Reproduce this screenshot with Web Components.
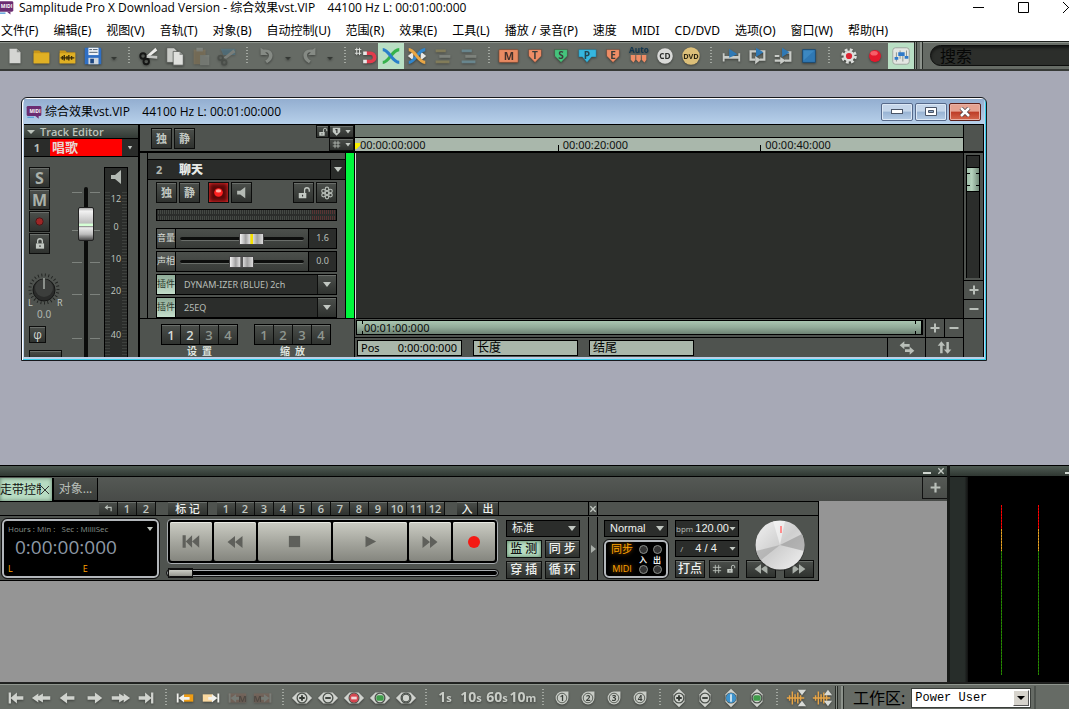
<!DOCTYPE html>
<html lang="zh-CN">
<head>
<meta charset="utf-8">
<title>Samplitude Pro X</title>
<style>
  html, body {
    height: 100%;
    margin: 0;
    overflow: hidden;
    background: #a7a9b6;
  }

  body {
    font: 12px/16px "Noto Sans", "Noto Sans CJK SC", sans-serif;
    color: #000;
    --panel: #4f534f;
    --panel-dark: #2b2d2b;
    --mint: #b7dcc2;
    --ruler: #a9b7ab;
    --light: #c2c8c2;
  }
</style>
</head>
<body>
<samp-app></samp-app>

<script>
/* ---------- helpers ---------- */

const BASE_CSS = `
  *, *::before, *::after { box-sizing: border-box; }
  button, input, select { font: inherit; color: inherit; margin: 0; padding: 0; border: 0; border-radius: 0; }
  button { background: none; display: flex; align-items: center; justify-content: center; white-space: nowrap; }
  .key {
    background: linear-gradient(#4b4f4b, #2f322f);
    border: 1px solid #0c0d0c;
    box-shadow: inset 0 1px 0 #6a6e6a;
    color: var(--light);
  }
  .down::after {
    content: "";
    width: 8px;
    height: 5px;
    background: var(--light);
    clip-path: polygon(0 0, 100% 0, 50% 100%);
  }
`;

function define(name, css, html, setup) {
  const template = document.createElement('template');
  template.innerHTML = `<style>${BASE_CSS}${css}</style>${html}`;

  customElements.define(name, class extends HTMLElement {
    constructor() {
      super();
      this.attachShadow({ mode: 'open' });
      this.shadowRoot.appendChild(template.content.cloneNode(true));
    }

    connectedCallback() {
      if (setup) setup(this, this.shadowRoot);
    }
  });
}

/* ---------- icons (24 x 24 grid) ---------- */

const shield = (color, letter) => `
  <path d="M5 5h14v7l-7 7-7-7z" fill="${color}" stroke="#3b2a22" stroke-opacity=".4"/>
  <text x="12" y="15" class="b" font-size="11" fill="#3a3d3a">${letter}</text>`;

const cross = (a, b) => `
  <path d="M3 19c7 0 10-14 18-14" fill="none" stroke="${a}" stroke-width="3.4"/>
  <path d="M3 5c7 0 10 14 18 14" fill="none" stroke="${b}" stroke-width="3.4"/>`;

const eye = inner => `
  <path d="M1 12l6-6h10l6 6-6 6H7z" fill="#d0d3ce"/><circle cx="12" cy="12" r="6" fill="#4b504b"/>
  <circle cx="12" cy="12" r="4.6" fill="#d0d3ce"/>${inner}`;

const eyeV = inner => `
  <path d="M12 2l6 6v8l-6 6-6-6V8z" fill="#d0d3ce"/><circle cx="12" cy="12" r="6" fill="#4b504b"/>
  <circle cx="12" cy="12" r="4.6" fill="#d0d3ce"/>${inner}`;

const slotNo = n => `
  <path d="M5 12a7 7 0 0 1 7-7h7v7a7 7 0 0 1-14 0z" fill="#c8ccc6"/>
  <circle cx="12" cy="12" r="5.2" fill="none" stroke="#50554f"/>
  <text x="12" y="15.5" class="b" font-size="9" fill="#3a3f3a">${n}</text>`;

const arrowL = 'M3 12l8-6v4h8v4h-8v4z';
const arrowR = 'M21 12l-8-6v4H5v4h8v4z';

const bars = (a, o) => `<g opacity="${o}"><path d="M4 5h11v3H4zM4 17h15v3H4z" fill="${a}"/><path d="M8 11h12v3H8z" fill="#8b908a"/></g>`;

const wave = c => `<path d="M2 12h19M5 9v6M8 5v14M11 8v8M14 6v12M17 9v6" fill="none" stroke="${c}" stroke-width="1.6"/>`;

const ICONS = {
  midi: `<rect x="1" y="3" width="22" height="15" rx="2" fill="#6b2c71"/><path d="M14 18l5 4v-4z" fill="#6b2c71"/>
    <path d="M2 20h10" stroke="#5aa0d8" stroke-width="2"/><text x="13.500" y="13" class="b" font-size="7" fill="#fff">MIDI</text>`,
  new: '<path d="M6 4h8l4 4v12H6z" fill="#d4d5d2"/><path d="M14 4v4h4z" fill="#8f928e"/>',
  folder: '<path d="M4 6h6l2 2h9v12H4z" fill="#c9961a"/><path d="M4 9h17v11H4z" fill="#e0b024"/>',
  wavfolder: '<path d="M4 6h6l2 2h9v12H4z" fill="#c9961a"/><path d="M4 9h17v11H4z" fill="#e0b024"/><path d="M5 14h15M7 12v4M9 11v6M12 12v4M14 11v6M17 12v4" stroke="#3a2c08" stroke-width="1.500"/>',
  save: '<path d="M3 3h17l1 1v17H3z" fill="#2f6fc4"/><path d="M7 3h11v8H7z" fill="#eef2f7"/><path d="M8 5h3M12 5h5M8 8h9" stroke="#456"/><path d="M7 14h11v7H7z" fill="#cfd6de"/><path d="M9 15h4v5H9z" fill="#1d4680"/>',
  cut: '<path d="M8 13L19 3l2 3-10 8z" fill="#ececea"/><path d="M8 11l13 1v3l-12-1z" fill="#c2c4c1"/><circle cx="5.500" cy="12" r="3" fill="none" stroke="#151615" stroke-width="2"/><circle cx="9" cy="18" r="3" fill="none" stroke="#151615" stroke-width="2"/>',
  copy: '<path d="M3 3h8l3 3v13H3z" fill="#c9cbc7" stroke="#4b4f4b" stroke-width=".8"/><path d="M10 7h7l4 4v11H10z" fill="#dfe0dd" stroke="#4b4f4b" stroke-width=".8"/><path d="M17 7v4h4z" fill="#8f928e"/>',
  paste: '<g opacity=".45"><path d="M4 5h13v16H4z" fill="#9a8259"/><path d="M7 3h7v4H7z" fill="#a6aaa5"/><path d="M11 11h10v11H11z" fill="#999e98"/></g>',
  brush: '<g opacity=".5"><path d="M5 4h16v7H8z" fill="#4d7f97"/><path d="M8 14L19 5l2 3-10 7z" fill="#a2a6a1"/><circle cx="5" cy="14" r="2.500" fill="none" stroke="#3b3f3b" stroke-width="2"/><circle cx="9" cy="19" r="2.500" fill="none" stroke="#3b3f3b" stroke-width="2"/></g>',
  undo: '<path d="M5 3v8h8l-3-3c5-1 6 6 0 9l2 3c10-5 7-17-4-15z" fill="#858a84"/>',
  redo: '<path d="M19 3v8h-8l3-3c-5-1-6 6 0 9l-2 3C2 15 5 3 16 5z" fill="#858a84"/>',
  magnet: '<path d="M3 3v8M6 3v8M1 5h7M1 9h7" stroke="#e4e6e3"/><path d="M12 9h6a4 4 0 0 1 0 9h-6" fill="none" stroke="#e23c4c" stroke-width="4"/><path d="M10 7h4v4h-4zM10 16h4v4h-4z" fill="#e8e8e8"/>',
  cross: cross('#36b24c', '#2a7fc9'),
  crossauto: '<path d="M2 12l6-5v10zM22 12l-6-5v10z" fill="#e8e8e6"/>' + cross('#3186cc', '#e8a646'),
  bars1: bars('#91875b', .75),
  bars2: bars('#6f95a0', .75),
  m: '<rect x="1" y="5" width="21" height="14" rx="1" fill="#e88a62" stroke="#6b3b27" stroke-opacity=".6"/><text x="12" y="16" class="b" font-size="12" fill="#43302a">M</text>',
  t: shield('#ee8d66', 'T'),
  s: shield('#45c37c', 'S'),
  p: '<path d="M3 5h19v8h-5l-5 6-5-6H3z" fill="#35b6df" stroke="#1d5b70" stroke-opacity=".4"/><text x="12" y="15" class="b" font-size="11" fill="#234450">P</text>',
  e: shield('#ee8d66', 'E'),
  auto: '<text x="12" y="9" class="b" font-size="9" fill="#12364f">Auto</text><path d="M3 11h5v5l-2 3-3-3zM9 11h5v5l-2 3-3-3zM15 11h5v5l-2 3-3-3z" fill="#ee8d66"/>',
  cd: '<circle cx="12" cy="12" r="8.500" fill="#d9dad8"/><text x="12" y="15.500" class="b" font-size="9" fill="#2c2e2c">CD</text>',
  dvd: '<circle cx="12" cy="12" r="9.500" fill="#dcbf79"/><text x="12" y="15" class="b" font-size="8" fill="#2e2714">DVD</text>',
  range: '<path d="M3 9h2v3h15V9h2v9h-2v-3H5v3H3z" fill="#c9ccc8"/><path d="M10 4l9 6-9 4z" fill="#2f79b5"/>',
  loop: '<path d="M11 7H5v9h5M15 7h5v9h-5" fill="none" stroke="#c9ccc8" stroke-width="2.400"/><path d="M10 12l6 4-6 5z" fill="#c9ccc8"/><path d="M11 3l8 5-8 5z" fill="#2f79b5"/>',
  punch: '<path d="M3 17h8M14 17h6V8h-4" fill="none" stroke="#c9ccc8" stroke-width="2.400"/><path d="M9 13l6 4-6 4zM3 11h5v2H3z" fill="#c9ccc8"/><path d="M11 3l8 5-8 5z" fill="#2f79b5"/>',
  stop: '<path d="M5 5h14v14H5z" fill="#2f78b4" stroke="#1d4a72"/><path d="M6 6h12L6 17z" fill="#4a97d0" opacity=".5"/>',
  gear: '<circle cx="12" cy="12" r="7" fill="none" stroke="#dcdedb" stroke-width="3" stroke-dasharray="3 2.500"/><circle cx="12" cy="12" r="6" fill="#dcdedb"/><circle cx="12" cy="12" r="3.400" fill="#dd2433"/>',
  rec: '<circle cx="12" cy="12" r="6.500" fill="#e3182c"/><ellipse cx="11" cy="9" rx="4" ry="2.500" fill="#ff7b82" opacity=".7"/>',
  mixer: '<rect x="3" y="3" width="18" height="18" rx="3" fill="#e3e6e2" stroke="#9aa39b"/><path d="M7 8v10M11 6v9M14 9v9M18 6v8" stroke="#8a908a"/><path d="M5 13h4v3H5zM9 8h4v4H9zM13 8h3v4h-3zM16 12h4v3h-4z" fill="#2f79c9"/>',
  first: '<path d="M4 6h2.500v12H4z" fill="#d0d3ce"/><path d="M6 12l7-6v4h7v4h-7v4z" fill="#d0d3ce"/>',
  rew: '<path d="M1 12l7-5v3l5-3v3h8v4h-8v3l-5-3v3z" fill="#d0d3ce"/>',
  left: `<path d="${arrowL}" fill="#d0d3ce"/>`,
  right: `<path d="${arrowR}" fill="#d0d3ce"/>`,
  ffwd: '<path d="M23 12l-7-5v3l-5-3v3H3v4h8v3l5-3v3z" fill="#d0d3ce"/>',
  last: '<path d="M17.500 6H20v12h-2.500z" fill="#d0d3ce"/><path d="M18 12l-7-6v4H4v4h7v4z" fill="#d0d3ce"/>',
  startsel: '<path d="M11 8h10v8H11z" fill="#ef9d14"/><path d="M3 7h2v10H3zM5 12l6-4v3h6v3h-6v3z" fill="#f2f2ee"/>',
  endsel: '<path d="M3 8h11v8H3z" fill="#fbd9a0"/><path d="M19 7h2v10h-2zM19 12l-6-4v3H9v3h4v3z" fill="#f2f2ee"/>',
  startm: '<g opacity=".5"><path d="M3 7h19v10H3z" fill="#8b6a5c"/><path d="M3 7h2v10H3zM5 12l6-4v3h4v3h-4v3z" fill="#9a9d98"/><text x="18" y="16" class="b" font-size="10" fill="#4b3b34">M</text></g>',
  endm: '<g opacity=".5"><path d="M2 7h19v10H2z" fill="#8b6a5c"/><path d="M19 7h2v10h-2zM19 12l-6-4v3H9v3h4v3z" fill="#9a9d98"/><text x="6" y="16" class="b" font-size="10" fill="#4b3b34">M</text></g>',
  zin: eye('<path d="M9 12h6M12 9v6" stroke="#333833" stroke-width="2"/>'),
  zout: eye('<path d="M9 12h6" stroke="#333833" stroke-width="2"/>'),
  zred: eye('<circle cx="12" cy="12" r="5" fill="#d4454f"/><path d="M9 12h6" stroke="#f3d8da" stroke-width="3"/>'),
  zgreen: eye('<rect x="8" y="9" width="8" height="6" rx="2" fill="#3f9c4a"/>'),
  zdot: eye('<circle cx="12" cy="12" r="4.600" fill="#4b504b"/><circle cx="12" cy="12" r="3.500" fill="#d0d3ce"/>'),
  vin: eyeV('<path d="M9 12h6M12 9v6" stroke="#333833" stroke-width="2"/>'),
  vout: eyeV('<path d="M9 12h6" stroke="#333833" stroke-width="2"/>'),
  vblue: eyeV('<circle cx="12" cy="12" r="5.500" fill="#3d92cc"/><path d="M12 8v8" stroke="#cfe6f5" stroke-width="2"/>'),
  vgreen: eyeV('<rect x="8" y="9" width="8" height="6" rx="2" fill="#3f9c4a"/>'),
  slot1: slotNo(1), slot2: slotNo(2), slot3: slotNo(3), slot4: slotNo(4),
  wavein: wave('#e8a546') + '<path d="M14 3h9l-4.500 6zM14 21h9l-4.500-6z" fill="#d8dad6"/>',
  waveout: wave('#e8a546') + '<path d="M14 9h9l-4.500-6zM14 15h9l-4.500 6z" fill="#d8dad6"/>',
  speaker: '<path d="M5 9h5l8-6v18l-8-6H5z" fill="#b4bab4"/>',
  lock: '<path d="M5 11h14v9H5z" fill="#c2c8c2"/><path d="M8 11V7a4 4 0 0 1 8 0v4" fill="none" stroke="#c2c8c2" stroke-width="2.200"/><path d="M12 14v3" stroke="#333" stroke-width="2"/>',
  unlock: '<path d="M3 12h13v9H3z" fill="#c2c8c2"/><path d="M13 12V7a4 4 0 0 1 8 0v3" fill="none" stroke="#c2c8c2" stroke-width="2.200"/><path d="M9.500 15v3" stroke="#333" stroke-width="2"/>',
  led: '<circle cx="12" cy="12" r="8" fill="#ff2020"/><ellipse cx="12" cy="9" rx="5" ry="3" fill="#ffaaa0"/>',
  leddim: '<circle cx="12" cy="12" r="8" fill="#9d2626" stroke="#4a1616" stroke-width="2"/>',
  reel: '<g fill="none" stroke="#b4bab4" stroke-width="2"><circle cx="12" cy="12" r="3"/><circle cx="12" cy="5" r="3"/><circle cx="12" cy="19" r="3"/><circle cx="6" cy="8.500" r="3"/><circle cx="18" cy="8.500" r="3"/><circle cx="6" cy="15.500" r="3"/><circle cx="18" cy="15.500" r="3"/></g>',
  hash: '<path d="M8 2v20M16 2v20M2 8h20M2 16h20" stroke="#c2c8c2" stroke-width="2"/>',
  mark: '<path d="M2 2h20v11l-10 10L2 13z" fill="#c2c8c2"/><path d="M9 7h4v9" fill="none" stroke="#333" stroke-width="3"/>',
  plus: '<path d="M12 3v18M3 12h18" stroke="#b9bfb9" stroke-width="4"/>',
  minus: '<path d="M3 12h18" stroke="#b9bfb9" stroke-width="4"/>',
  swaph: '<path d="M1 8l7-6v4h8v4H8v4zM23 16l-7-6v4H9v4h7v4z" fill="#b9bfb9"/>',
  swapv: '<path d="M7 2L1 9h4v12h4V9h4zM17 22l-6-7h4V3h4v12h4z" fill="#b9bfb9"/>',
  tostart: '<path d="M2 4h4v16H2zM14 4v16L6 12zM23 4v16l-9-8z" fill="#5f605b"/>',
  back: '<path d="M12 4v16L2 12zM22 4v16l-10-8z" fill="#5f605b"/>',
  halt: '<path d="M3 3h18v18H3z" fill="#5f605b"/>',
  play: '<path d="M4 3l17 9-17 9z" fill="#5f605b"/>',
  fwd: '<path d="M2 4v16l10-8zM12 4v16l10-8z" fill="#5f605b"/>',
  backl: '<path d="M12 4v16L1 12zM23 4v16l-11-8z" fill="#a9afa9"/>',
  fwdl: '<path d="M1 4v16l11-8zM12 4v16l11-8z" fill="#a9afa9"/>',
  record: '<circle cx="12" cy="12" r="12" fill="#f41a14"/>',
  hook: '<path d="M4 9h15v10M10 4L4 9l6 5" fill="none" stroke="#b9bfb9" stroke-width="3"/>',
  x: '<path d="M4 4l16 16M20 4L4 20" stroke="#c2c8c2" stroke-width="4"/>'
};

define('ui-icon', `
  :host { display: inline-flex; flex: none; width: var(--icon, 24px); height: var(--icon, 24px); }
  svg { width: 100%; height: 100%; display: block; overflow: visible; }
  .b { font-family: "Open Sans", sans-serif; font-weight: 700; text-anchor: middle; }
`, '<svg viewBox="0 0 24 24" aria-hidden="true"></svg>', (el, root) => {
  root.querySelector('svg').innerHTML = ICONS[el.getAttribute('name')] || '';
  if (el.hasAttribute('size')) el.style.setProperty('--icon', el.getAttribute('size') + 'px');
});

/* ---------- window chrome ---------- */

define('app-titlebar', `
  :host { display: flex; height: 18px; background: #fff; overflow: hidden; flex: none; }
  ui-icon { margin: -1px 5px 0 -3px; --icon: 17px; }
  .text { flex: 1; white-space: pre; line-height: 15px; font-family: "Open Sans", "Noto Sans CJK SC", sans-serif; }
  .controls { display: flex; margin-right: -22px; }
  button { width: 45px; height: 15px; }
  svg { display: block; }
`, `
  <ui-icon name="midi"></ui-icon>
  <div class="text"><slot></slot></div>
  <div class="controls">
    <button aria-label="Minimize"><svg width="11" height="11"><path d="M0 5.500h11" stroke="#000"/></svg></button>
    <button aria-label="Maximize"><svg width="11" height="11"><path d="M.5.5h10v10H.5z" fill="none" stroke="#000"/></svg></button>
    <button aria-label="Close"><svg width="11" height="11"><path d="M0 0l11 11M11 0L0 11" stroke="#000"/></svg></button>
  </div>
`);

define('app-menubar', `
  :host { display: flex; height: 23px; background: #fff; padding: 2px 0 0 1px; flex: none; }
  nav { display: flex; gap: 15px; align-items: center; }
  button { height: 20px; }
`, '<nav></nav>', (el, root) => {
  const nav = root.querySelector('nav');
  el.getAttribute('items').split('|').forEach(text => {
    const button = document.createElement('button');
    button.textContent = text;
    nav.append(button);
  });
});

/* one shared strip style for the top and bottom bars */
define('tool-strip', `
  :host { display: flex; align-items: center; background: #666b65; border-top: 1px solid #1d201d; box-shadow: inset 0 1px 0 #8f958e; flex: none; overflow: hidden; }
`, '<slot></slot>');

define('tool-sep', `
  :host { flex: none; width: var(--sep, 14px); height: 18px; background: repeating-linear-gradient(#a3a8a1 0 1px, transparent 1px 3px) center / 2px 100% no-repeat; }
`, '');

define('tool-edge', `
  :host { flex: none; width: 9px; align-self: stretch; border: solid #262a26; border-width: 0 1px; background: linear-gradient(90deg, #858b84 1px, #262a26 1px 2px, #666b65 2px 5px, #8d938c 5px); }
`, '');

define('tool-button', `
  :host { display: block; flex: none; width: 26px; height: 26px; }
  button { width: 100%; height: 100%; filter: drop-shadow(0 1px 1px #0006); }
  :host([active]) button { background: #b9dfc4; filter: none; }
  :host([caret]) { width: 16px; }
  :host([caret]) button::after { content: ""; border: solid transparent; border-width: 3px 3px 0; border-top-color: #343834; margin-top: 6px; }
  .text { font: 700 14px/20px "Open Sans", sans-serif; color: #c9cdc7; }
  .text small { font-size: 11px; }
`, '<button></button>', (el, root) => {
  const button = root.querySelector('button');
  const text = el.getAttribute('text');
  button.setAttribute('aria-label', el.getAttribute('label') || text || 'More');
  if (text) {
    button.innerHTML = `<span class="text">${text.slice(0, -1)}<small>${text.slice(-1)}</small></span>`;
  } else if (el.hasAttribute('icon')) {
    button.innerHTML = `<ui-icon name="${el.getAttribute('icon')}" size="${el.getAttribute('size') || 22}"></ui-icon>`;
  }
});

function stripHtml(spec) {
  return spec.split(' ').map(part => {
    if (part === '|') return '<tool-sep></tool-sep>';
    if (part === 'v') return '<tool-button caret></tool-button>';
    if (part[0] === '#') return `<tool-button text="${part.slice(1)}"></tool-button>`;
    const active = part[0] === '*';
    const icon = active ? part.slice(1) : part;
    return `<tool-button icon="${icon}" label="${icon}"${active ? ' active' : ''}></tool-button>`;
  }).join('');
}

define('app-toolbar', `
  :host { display: block; flex: none; }
  tool-strip { height: 30px; padding-left: 2px; border-bottom: 2px solid #363936; }
  .search {
    flex: 1; min-width: 60px; height: 21px; margin: 0 -20px 0 7px; padding-left: 9px;
    border: 1px solid #0d0e0d; border-radius: 11px; outline: 0;
    background: #2c2e2b; box-shadow: inset 0 2px 3px #0008; font-size: 16px; line-height: 18px;
  }
  .search::placeholder { color: #060706; opacity: 1; }
`, `<tool-strip>
    ${stripHtml('new folder wavfolder save v | cut copy paste brush | undo v redo v | magnet *cross crossauto bars1 bars2 | m t s p e auto cd dvd | range loop punch stop | gear rec *mixer')}
    <tool-edge></tool-edge>
    <input class="search" type="text" placeholder="搜索" aria-label="搜索">
  </tool-strip>`);

define('app-statusbar', `
  :host { display: block; flex: none; }
  tool-strip { height: 26px; padding: 2px 0 0 3px; --sep: 13px; }
  label { margin: 0 6px 0 9px; font-size: 16px; line-height: 24px; white-space: nowrap; }
  .box { position: relative; width: 120px; height: 20px; border: 1px solid #3a3e3a; background: #fff; display: flex; }
  select { flex: 1; appearance: none; background: #fff; padding-left: 3px; font: 12px/18px "Liberation Mono", monospace; outline: 0; }
  .drop { position: absolute; right: 1px; top: 1px; width: 16px; height: 16px; background: #d6d3cc; border: 1px solid; border-color: #fff #555 #555 #fff; display: grid; place-items: center; pointer-events: none; }
  .drop::after { content: ""; border: solid transparent; border-width: 4px 4px 0; border-top-color: #000; }
  .rest { flex: 1; align-self: stretch; margin-left: 3px; border-left: 2px solid #4e534e; }
`, `<tool-strip>
    ${stripHtml('first rew left right ffwd last | startsel endsel startm endm | zin zout zred zgreen zdot | #1s #10s #60s #10m | slot1 slot2 slot3 slot4 | vin vout vblue vgreen | wavein waveout')}
    <tool-edge></tool-edge>
    <label for="ws">工作区:</label>
    <div class="box"><select id="ws"><option>Power User</option></select><span class="drop"></span></div>
    <div class="rest"></div>
  </tool-strip>`);

/* ---------- project window ---------- */

define('project-window', `
  :host {
    display: block; border: 1px solid #16181c; border-radius: 6px 6px 0 0; padding: 0 2px 3px 2px;
    background: #bcd0e8; box-shadow: inset 1px 1px 0 #fff, inset -1px -1px 0 #35cdea;
  }
  header { display: flex; align-items: center; gap: 2px; height: 25px; margin: 1px 0 0; background: linear-gradient(#93aed0, #b7d0ea); }
  ui-icon { --icon: 16px; margin: 0 1px 0 2px; }
  .text { flex: 1; white-space: pre; font-family: "Open Sans", "Noto Sans CJK SC", sans-serif; }
  button { width: 32px; height: 18px; border: 1px solid #56698a; border-radius: 2px; background: linear-gradient(#c5d6ea 45%, #98b3d3 50%, #b5cce6); box-shadow: inset 0 0 0 1px #dce8f5; }
  button.close { background: linear-gradient(#e5a291 45%, #bd3c26 50%, #d4684e); border-color: #5b1f1a; box-shadow: inset 0 0 0 1px #e8b0a4; margin-right: 3px; }
  .body { display: grid; grid-template-columns: 116px 215px minmax(0, 1fr); height: 233px; border-top: 1px solid #000; background: var(--panel); border-right: 1px solid #000; overflow: hidden; }
`, `
  <header>
    <ui-icon name="midi"></ui-icon>
    <div class="text"><slot name="title"></slot></div>
    <button aria-label="Minimize"><svg width="12" height="6"><rect x=".5" y=".5" width="11" height="4" fill="#fff" stroke="#4a5568"/></svg></button>
    <button aria-label="Restore"><svg width="12" height="10"><path d="M.5.5h11v8H.5z" fill="#fff" stroke="#4a5568"/><path d="M3.500 3.500h5v2h-5z" fill="#8fa8c8" stroke="#4a5568"/></svg></button>
    <button class="close" aria-label="Close"><svg width="12" height="10"><path d="M2 1l8 8M10 1L2 9" stroke="#4a3a40" stroke-width="4"/><path d="M2 1l8 8M10 1L2 9" stroke="#fff" stroke-width="2.500"/></svg></button>
  </header>
  <div class="body"><slot></slot></div>
`);

define('track-console', `
  :host { display: flex; flex-direction: column; border-right: 2px solid #000; overflow: hidden; }
  h2 { margin: 0; height: 14px; display: flex; align-items: center; gap: 5px; padding-left: 3px; font: 600 11px/13px "Open Sans", sans-serif; color: #bcc4bc; background: linear-gradient(#545c56, #333a35); border-bottom: 1px solid #000; }
  h2::before { content: ""; border: solid transparent; border-width: 4px 4px 0; border-top-color: #bcc4bc; }
  .name { display: flex; height: 18px; background: #2a2c2a; border-bottom: 1px solid #000; color: #d5dad5; flex: none; }
  .name b { width: 26px; text-align: center; font-size: 11px; line-height: 17px; color: #b9bfb9; }
  .name strong { flex: 0 0 72px; background: #f00; font-size: 13px; line-height: 16px; padding-left: 2px; color: #e8d5d0; }
  .name button { flex: 1; }
  .name .down::after { width: 5px; height: 4px; }
  .strip { flex: 1; display: flex; padding-top: 10px; min-height: 0; }
  .left { width: 48px; padding-left: 5px; display: flex; flex-direction: column; gap: 1px; }
  .left .key { width: 21px; height: 21px; font: 700 16px/20px "Open Sans", sans-serif; flex: none; color: #a9b0a9; }
  .left .knob { display: block; margin: 17px 0 0 -3px; flex: none; }
  .left output { margin: 0 0 6px 8px; font-size: 10px; line-height: 10px; color: #b0b6b0; }
  .left .phase { width: 17px; height: 17px; font-size: 12px; line-height: 14px; font-weight: 400; color: #d0d6d0; }
  .left .more { width: 33px; height: 10px; margin-top: 6px; }
  .fader { flex: 1; display: grid; padding-top: 20px; }
  .fader > * { grid-area: 1 / 1; }
  .fader input { writing-mode: vertical-lr; direction: rtl; appearance: none; background: none; width: 16px; height: 100%; margin-left: 6px; }
  input::-webkit-slider-runnable-track { width: 4px; background: #0b0c0b; border-radius: 2px 2px 0 0; }
  input::-webkit-slider-thumb { appearance: none; width: 16px; height: 34px; margin-left: -6px; border: 1px solid #222; border-radius: 2px; background: linear-gradient(#aaa 0, #f2f2f2 10%, #bbb 48%, #d5ffd5 49% 56%, #888 57%, #ececec 62%, #bbb 82%, #4a4a4a); }
  .meter { width: 24px; margin-right: 10px; background: repeating-linear-gradient(#3e413e 0 1px, #2b2d2b 1px 3px); border: 1px solid #000; border-bottom: 0; }
  .meter svg { display: block; }
  svg text { font: 9px "Open Sans", sans-serif; fill: #c0c7c0; }
`, `
  <h2>Track Editor</h2>
  <div class="name"><b>1</b><strong>唱歌</strong><button class="down" aria-label="Track list"></button></div>
  <div class="strip">
    <div class="left">
      <button class="key">S</button>
      <button class="key">M</button>
      <button class="key" aria-label="Record"><ui-icon name="leddim" size="11"></ui-icon></button>
      <button class="key" aria-label="Lock"><ui-icon name="lock" size="14"></ui-icon></button>
      <svg class="knob" width="38" height="36">
        <circle cx="18" cy="17" r="14" fill="none" stroke="#1f211f" stroke-width="3" stroke-dasharray="1 3" pathLength="100"/>
        <circle cx="18" cy="18" r="11" fill="#2a2b2a" stroke="#151615"/><circle cx="18" cy="16" r="9" fill="#3c3e3c"/><path d="M18 6v11" stroke="#8c918c" stroke-width="2"/>
        <text x="2" y="34">L</text><text x="31" y="34">R</text>
      </svg>
      <output>0.0</output>
      <button class="key phase" aria-label="Phase">φ</button>
      <button class="key more" aria-label="More"></button>
    </div>
    <div class="fader">
      <svg width="30" height="160"><path d="M0 5.500h10M18 5.500h10M0 43.500h10M18 43.500h10M0 75.500h10M18 75.500h10M0 107.500h10M18 107.500h10M0 151.500h10M18 151.500h10" stroke="#7d827d"/></svg>
      <input type="range" min="0" max="100" value="85" aria-label="Track volume">
    </div>
    <div class="meter">
      <svg width="22" height="188">
        <rect width="22" height="23" fill="#2b2d2b"/><rect x="5" y="23" width="12" height="165" fill="#2b2d2b"/>
        <path d="M6 7h4l6-5v14l-6-5H6z" fill="#b4bab4"/>
        <g text-anchor="middle"><text x="11" y="34">12</text><text x="11" y="62">0</text><text x="11" y="94">10</text><text x="11" y="126">20</text><text x="11" y="170">40</text></g>
      </svg>
    </div>
  </div>
`);

define('param-row', `
  :host { display: flex; height: 21px; border: 1px solid #000; background: #2b2d2b; color: #b9bfb9; }
  .tag { width: 19px; flex: none; text-align: center; font-size: 9px; line-height: 18px; white-space: nowrap; background: linear-gradient(#5b5f5b, #3a3d3a); border-right: 1px solid #000; color: #d5dad5; }
  .mid { flex: 1; display: flex; align-items: center; padding: 0 4px; background: linear-gradient(#4c504c, #383b38); }
  output { width: 28px; border-left: 1px solid #000; text-align: center; font-size: 9px; line-height: 18px; }
  input { appearance: none; width: 100%; height: 16px; background: none; }
  input::-webkit-slider-runnable-track { height: 4px; background: #0d0e0d; border-radius: 2px; border-bottom: 1px solid #6a6e6a; }
  input::-webkit-slider-thumb { appearance: none; width: 25px; height: 12px; margin-top: -4px; border: 1px solid #444; background: linear-gradient(90deg, #f4f4f4, #a0a0a0 25%, #d8d8d8 40% 45%, var(--mark, #555) 46% 56%, #d8d8d8 57%, #a0a0a0 75%, #ddd); }
  :host([kind="plugin"]) .tag { background: linear-gradient(#8fac98, #c3ddca); color: #2c3a30; }
  .plug { flex: 1; padding-left: 8px; font-size: 9px; line-height: 19px; white-space: nowrap; }
  button.down { width: 19px; border-width: 0 0 0 1px; }
`, '', (el, root) => {
  const get = name => el.getAttribute(name);
  const tag = `<span class="tag">${get('tag')}</span>`;
  const body = get('kind') === 'plugin'
    ? `${tag}<span class="plug">${get('text')}</span><button class="key down" aria-label="${get('text')}"></button>`
    : `${tag}<span class="mid"><input type="range" min="0" max="100" value="${get('value')}" aria-label="${get('tag')}"></span><output>${get('text')}</output>`;
  const box = document.createElement('template');
  box.innerHTML = body;
  root.appendChild(box.content);
});

define('track-head', `
  :host { display: flex; flex-direction: column; background: var(--panel); border-right: 1px solid #000; overflow: hidden; }
  .key { width: 21px; height: 21px; font-size: 11px; font-weight: 700; line-height: 18px; flex: none; }
  .top { display: flex; height: 28px; border-bottom: 2px solid #000; }
  .pair { display: flex; gap: 2px; padding: 3px 0 0 11px; flex: 1; }
  .opts { display: grid; grid-template-columns: 13px 25px; grid-auto-rows: 13px; }
  .opts .key { width: auto; height: 13px; gap: 4px; }
  .opts .down::after { width: 6px; height: 4px; }
  .opts :last-child { grid-column: 2; }
  .track { display: flex; height: 166px; border-bottom: 1px solid #000; }
  .card { width: 199px; margin-left: 7px; border-left: 1px solid #000; padding-top: 6px; flex: 1; }
  .green { width: 9px; background: #00f73c; border-left: 1px solid #000; }
  .name { display: flex; height: 21px; border: solid #000; border-width: 1px 0; background: #2a2c2a; color: #e8ebe8; font-size: 12px; line-height: 19px; font-weight: 700; }
  .name span { width: 31px; padding-left: 8px; font-size: 11px; color: #b0b6b0; }
  .name strong { flex: 1; }
  .name button { width: 15px; border-left: 1px solid #000; }
  .icons { display: flex; gap: 2px; padding: 2px 8px 0; }
  .icons .gap-s { margin-left: 6px; }
  .icons .gap-l { margin-left: auto; }
  .on { background: #5a0808; box-shadow: inset 0 0 4px #f33; }
  .vu { height: 12px; margin: 6px 8px 7px; border: 1px solid #000; background: linear-gradient(transparent 4px, #2b2d2b 4px 6px, transparent 6px), repeating-linear-gradient(90deg, #2b2d2b 0 1px, transparent 1px 2px), linear-gradient(90deg, #444844 86%, #583434 86%); }
  .rows { display: grid; gap: 2px; margin: 0 8px; }
  .banks { display: flex; gap: 16px; padding: 5px 0 0 21px; text-align: center; color: #dfe4df; font-weight: 700; font-size: 10px; line-height: 12px; }
  .bank div { display: flex; border: 1px solid #000; }
  .bank .key { width: 19px; height: 19px; border-width: 0 1px 0 0; font: 600 13px/18px "Open Sans", sans-serif; color: #8f968f; }
  .bank .key:last-child { border: 0; width: 18px; }
  .bank .lit { color: #d5dad5; }
`, `
  <div class="top">
    <div class="pair"><button class="key">独</button><button class="key">静</button></div>
    <div class="opts">
      <button class="key" aria-label="Unlock"><ui-icon name="unlock" size="10"></ui-icon></button>
      <button class="key down" aria-label="Marker"><ui-icon name="mark" size="9"></ui-icon></button>
      <button class="key down" aria-label="Grid"><ui-icon name="hash" size="9"></ui-icon></button>
    </div>
  </div>
  <div class="track">
    <div class="card">
      <div class="name"><span>2</span><strong>聊天</strong><button class="down" aria-label="Track menu"></button></div>
      <div class="icons">
        <button class="key">独</button><button class="key">静</button>
        <button class="key on gap-s" aria-label="Record"><ui-icon name="led" size="13"></ui-icon></button>
        <button class="key" aria-label="Monitor"><ui-icon name="speaker" size="15"></ui-icon></button>
        <button class="key gap-l" aria-label="Unlock"><ui-icon name="unlock" size="14"></ui-icon></button>
        <button class="key" aria-label="Effects"><ui-icon name="reel" size="14"></ui-icon></button>
      </div>
      <div class="vu"></div>
      <div class="rows">
        <param-row tag="音量" value="60" text="1.6" style="--mark:#f5e000"></param-row>
        <param-row tag="声相" value="49" text="0.0"></param-row>
        <param-row kind="plugin" tag="插件" text="DYNAM-IZER (BLUE) 2ch"></param-row>
        <param-row kind="plugin" tag="插件" text="25EQ"></param-row>
      </div>
    </div>
    <div class="green"></div>
  </div>
  <div class="banks">
    <div class="bank"><div><button class="key lit">1</button><button class="key lit">2</button><button class="key">3</button><button class="key">4</button></div>设&nbsp; 置</div>
    <div class="bank"><div><button class="key">1</button><button class="key">2</button><button class="key">3</button><button class="key">4</button></div>缩&nbsp; 放</div>
  </div>
`);

define('track-timeline', `
  :host { display: grid; grid-template: 28px 1fr 19px 19px / minmax(0, 1fr) 20px; background: var(--panel); font-size: 11px; line-height: 13px; }
  .overview { height: 13px; background: #6c776e; border-bottom: 1px solid #000; }
  .ruler { display: grid; grid-template-columns: repeat(3, 1fr); height: 15px; background: var(--ruler); border-bottom: 2px solid #000; color: #101210; }
  .ruler span { padding: 1px 0 0 5px; line-height: 12px; background: linear-gradient(#000, #000) 0 100% / 1px 6px no-repeat; }
  .ruler span:first-child { background: linear-gradient(135deg, #f8f000 5px, transparent 5px) 0 5px / 6px 6px no-repeat; }
  .canvas { background: #2c2e2b; border-left: 1px solid #ddd; border-bottom: 1px solid #000; }
  .corner, .vbar, .base { border-left: 1px solid #000; }
  .corner { border-bottom: 2px solid #000; }
  .vbar { display: flex; flex-direction: column; border-bottom: 1px solid #000; }
  .vtrack { flex: 1; margin: 2px 3px 0 2px; border: 1px solid #000; border-bottom: 0; background: #2b2d2b; padding-top: 11px; }
  .vthumb { height: 25px; border: solid #000; border-width: 1px 0; background: linear-gradient(#000, #000) 0 5px / 3px 1px no-repeat, linear-gradient(#000, #000) 100% 5px / 3px 1px no-repeat, linear-gradient(#000, #000) 0 17px / 3px 1px no-repeat, linear-gradient(#000, #000) 100% 17px / 3px 1px no-repeat, linear-gradient(90deg, #9fbfa8, #b6d2bd 40%, #728a79); }
  .vbar button { height: 19px; border-top: 1px solid #000; }
  .vbar button:first-of-type { margin-top: 2px; }
  .hbar { display: flex; border-bottom: 1px solid #000; padding-left: 1px; }
  .hthumb { flex: 1; height: 15px; margin: 1px 2px 0 0; border: 1px solid #000; border-right-width: 2px; padding-left: 7px; background: linear-gradient(#000 3px, transparent 3px 10px, #000 10px) 5px 0 / 1px 13px no-repeat, linear-gradient(#000 3px, transparent 3px 10px, #000 10px) calc(100% - 5px) 0 / 1px 13px no-repeat, linear-gradient(#a9c5b0, #91aa98 50%, #6d8173); color: #0a0c0a; }
  .hbar button, .status button { border-left: 1px solid #000; }
  .hbar button { width: 19px; }
  .status { display: flex; align-items: center; gap: 11px; padding-left: 2px; }
  .field { width: 105px; height: 16px; border: 1px solid #000; background: var(--ruler); display: flex; justify-content: space-between; padding: 0 4px 0 3px; line-height: 14px; }
  .field.cjk { font-size: 12px; }
  .status .btns { display: flex; margin-left: auto; align-self: stretch; }
  .status button { width: 38px; }
  .base { grid-row: 3 / 5; grid-column: 2; }
`, `
  <div><div class="overview"></div><div class="ruler"><span>00:00:00:000</span><span>00:00:20:000</span><span>00:00:40:000</span></div></div>
  <div class="corner"></div>
  <div class="canvas"></div>
  <div class="vbar">
    <div class="vtrack"><div class="vthumb"></div></div>
    <button aria-label="Zoom in"><ui-icon name="plus" size="12"></ui-icon></button>
    <button aria-label="Zoom out"><ui-icon name="minus" size="12"></ui-icon></button>
  </div>
  <div class="hbar">
    <div class="hthumb">00:01:00:000</div>
    <button aria-label="Zoom in"><ui-icon name="plus" size="12"></ui-icon></button>
    <button aria-label="Zoom out"><ui-icon name="minus" size="12"></ui-icon></button>
  </div>
  <div class="base"></div>
  <div class="status">
    <div class="field"><span>Pos</span><span>0:00:00:000</span></div>
    <div class="field cjk">长度</div>
    <div class="field cjk">结尾</div>
    <div class="btns">
      <button aria-label="Fit width"><ui-icon name="swaph" size="16"></ui-icon></button>
      <button aria-label="Fit height"><ui-icon name="swapv" size="15"></ui-icon></button>
    </div>
  </div>
`);

/* ---------- dock ---------- */

define('dock-panel', `
  :host { display: flex; flex-direction: column; min-width: 0; overflow: hidden; border-top: 1px solid #000; }
  header { height: 11px; flex: none; display: flex; justify-content: flex-end; align-items: center; gap: 6px; padding-right: 2px; background: linear-gradient(#4f5b53, #2f3732); border-bottom: 1px solid #000; }
  button { height: 9px; }
  .bar { width: 8px; height: 2px; background: #d0d6d0; margin-top: 4px; }
  :host([cut]) header { padding: 0; margin-right: -4px; }
  :host([cut]) .x { display: none; }
`, `
  <header><button aria-label="Minimize"><span class="bar"></span></button><button class="x" aria-label="Close"><ui-icon name="x" size="8"></ui-icon></button></header>
  <slot></slot>
`);

define('dock-tabs', `
  :host { display: flex; height: 24px; flex: none; background: linear-gradient(#555955, #484b48); color: #b9bfb9; }
  button { font-size: 12px; line-height: 24px; overflow: hidden; height: 23px; margin-top: 1px; }
  .on { width: 52px; justify-content: flex-start; background: var(--mint); color: #111; box-shadow: inset 0 0 4px #5d7a66; }
  .on span { width: 41px; overflow: hidden; text-align: left; }
  .off { width: 46px; border: 1px solid #000; border-width: 0 1px 1px 2px; background: linear-gradient(#4a4e4a, #3a3d3a); }
  .add { width: 25px; height: 22px; margin: 0 0 0 auto; border: 1px solid #111; border-width: 0 0 1px 1px; }
`, `
  <button class="on"><span>走带控制</span><svg width="8" height="8"><path d="M0 0l8 8M8 0L0 8" stroke="#333"/></svg></button>
  <button class="off">对象...</button>
  <button class="add" aria-label="Add tab"><ui-icon name="plus" size="13"></ui-icon></button>
`);

define('combo-box', `
  :host { display: flex; align-items: center; min-width: 0; height: 17px; border: 1px solid #000; background: #2b2d2b; color: #f0f2f0; padding-right: 3px; font: 11px/15px "Liberation Sans", "Noto Sans CJK SC", sans-serif; }
  span { padding-left: 1px; color: #b9bfb9; font-family: "Open Sans", sans-serif; font-size: 9px; white-space: pre; }
  select { flex: 1; width: 0; min-width: 0; appearance: none; background: none; outline: 0; padding-left: 4px; height: 15px; }
  :host([prefix]) { padding-right: 2px; }
  :host([prefix]) span { padding: 0; font-size: 8px; }
  :host([prefix]) .down::after { width: 7px; height: 4px; }
  :host([prefix]) select { padding: 0; text-align: right; }
  :host([middle]) select { text-align: center; }
  option { color: #000; }
`, '<span></span><select><option></option></select><i class="down" style="display:flex"></i>', (el, root) => {
  root.querySelector('span').textContent = el.getAttribute('prefix') || '';
  root.querySelector('option').textContent = el.getAttribute('value');
  root.querySelector('select').setAttribute('aria-label', el.getAttribute('label'));
});

define('transport-panel', `
  :host { display: grid; grid-template: 15px 63px / 588px 10px 220px; align-self: flex-start; background: var(--panel); border: solid #000; border-width: 1px 1px 1px 0; color: var(--light); }
  .marks, .head { border-bottom: 1px solid #000; display: flex; height: 14px; }
  .marks { padding-left: 99px; gap: 12px; }
  .marks div { display: flex; }
  .marks .key { width: 19px; height: 13px; border-width: 0 1px 0 0; font: 600 11px/13px "Open Sans", sans-serif; }
  .marks .wide { width: 40px; margin-right: -3px; font: 500 11px/13px "Noto Sans CJK SC", sans-serif; color: #f0f2f0; }
  .marks .io { width: 21px; font: 500 11px/13px "Noto Sans CJK SC", sans-serif; color: #f0f2f0; }
  .main { display: flex; padding: 2px 8px 0 2px; gap: 8px; }
  .display { width: 157px; height: 59px; border: 2px solid #b3b7bb; border-radius: 5px; background: #000; outline: 1px solid #111; padding: 2px 4px 0; display: flex; flex-direction: column; }
  .units { display: flex; justify-content: space-between; align-items: center; font: 8px/12px "Open Sans", sans-serif; color: #8a938c; white-space: pre; }
  .units .down::after { width: 6px; height: 4px; }
  .time { padding-left: 7px; font: 19px/24px "Open Sans", sans-serif; color: #8d98a5; }
  .le { display: flex; gap: 70px; font: 9px/14px "Open Sans", sans-serif; color: #ffa200; margin-top: 3px; }
  .deck { width: 331px; display: flex; flex-direction: column; gap: 4px; }
  .keys { display: flex; gap: 2px; height: 45px; padding: 2px; background: #000; border: 1px solid #a9adb0; border-radius: 4px; }
  .keys button { flex: 42; background: linear-gradient(#cbccc3, #a3a49c 55%, #85867f); border-radius: 2px; box-shadow: inset 0 1px 0 #e8e9e2; }
  .keys .w { flex: 74; }
  .deck input { appearance: none; width: 100%; height: 10px; background: none; }
  .deck input::-webkit-slider-runnable-track { height: 6px; background: #000; border: 1px solid #a9adb0; outline: 1px solid #111; border-radius: 3px; }
  .deck input::-webkit-slider-thumb { appearance: none; width: 25px; height: 10px; margin-top: -3px; background: linear-gradient(#d5d6ce, #8d8e87); border: 1px solid #111; }
  .modes { flex: 1; display: grid; grid-template: 17px 18px 18px / 1fr 1fr; gap: 3px 3px; align-content: start; padding-top: 1px; }
  .modes combo-box { grid-column: 1 / 3; }
  .modes .key, .right .key { font-size: 12px; font-weight: 500; line-height: 16px; color: #f0f2f0; }
  .modes .on { background: var(--mint); color: #111; box-shadow: inset 0 0 4px #4f7a5b; }
  .grip { border: solid #000; border-width: 0 1px; display: grid; place-items: center; }
  .grip.t { border-bottom-width: 1px; height: 14px; }
  .grip i { border: solid transparent; border-width: 4px 0 4px 5px; border-left-color: #a9afa9; }
  .right { display: grid; grid-template-columns: 64px 64px 70px; gap: 7px; padding: 3px 0 0 6px; }
  .col { display: grid; grid-template: 17px 17px 18px / 64px; gap: 3px; align-content: start; }
  .sync { grid-row: 2 / 4; border: 2px solid #b3b7bb; border-radius: 5px; background: #000; outline: 1px solid #111; display: grid; grid-template-columns: 28px 1fr 1fr; grid-template-rows: 12px 8px 12px; align-items: center; justify-items: center; font-size: 11px; line-height: 12px; color: #ffa200; padding: 1px 2px; height: 38px; }
  .sync span { white-space: nowrap; text-shadow: 0 0 4px #b06a00; }
  .sync .m { font: 9px/12px "Open Sans", sans-serif; grid-area: 3 / 1; }
  .sync i { width: 9px; height: 9px; border: 1px solid #8a8e8a; border-radius: 50%; background: #333; }
  .sync em { font: 700 8px/9px "Noto Sans CJK SC", sans-serif; color: #f0f2f0; }
  .sync em:nth-of-type(1) { grid-area: 2 / 2; }
  .sync em:nth-of-type(2) { grid-area: 2 / 3; }
  .sync i:nth-of-type(3) { grid-area: 3 / 2; }
  .sync i:nth-of-type(4) { grid-area: 3 / 3; }
  .pair { display: grid; grid-template-columns: 30px 30px; gap: 4px; }
  .jog { display: grid; grid-template: 40px 18px / 30px 30px; column-gap: 8px; }
  .jog svg { grid-area: 1 / 1 / 3 / 3; z-index: 1; display: block; justify-self: center; }
  .jog .key { grid-area: 2 / 1; }
  .jog .key + .key { grid-area: 2 / 2; }
`, `
  <div class="marks">
    <div><button class="key" aria-label="Back"><ui-icon name="hook" size="9"></ui-icon></button><button class="key">1</button><button class="key">2</button></div>
    <button class="key wide">标 记</button>
    <div class="nums"></div>
    <div><button class="key io">入</button><button class="key io">出</button></div>
  </div>
  <div class="grip t"><ui-icon name="x" size="8"></ui-icon></div>
  <div class="head"></div>
  <div class="main">
    <div class="display">
      <div class="units"><span>Hours : Min :   Sec : MilliSec</span><i class="down" style="display:flex"></i></div>
      <div class="time">0:00:00:000</div>
      <div class="le"><span>L</span><span>E</span></div>
    </div>
    <div class="deck">
      <div class="keys">
        <button aria-label="To start"><ui-icon name="tostart" size="19"></ui-icon></button>
        <button aria-label="Rewind"><ui-icon name="back" size="18"></ui-icon></button>
        <button class="w" aria-label="Stop"><ui-icon name="halt" size="15"></ui-icon></button>
        <button class="w" aria-label="Play"><ui-icon name="play" size="15"></ui-icon></button>
        <button aria-label="Forward"><ui-icon name="fwd" size="18"></ui-icon></button>
        <button aria-label="Record"><ui-icon name="record" size="12"></ui-icon></button>
      </div>
      <input type="range" min="0" max="100" value="0" aria-label="Position">
    </div>
    <div class="modes">
      <combo-box label="Mode" value="标准"></combo-box>
      <button class="key on">监 测</button><button class="key">同 步</button>
      <button class="key">穿 插</button><button class="key">循 环</button>
    </div>
  </div>
  <div class="grip"><i></i></div>
  <div class="right">
    <div class="col">
      <combo-box label="Speed" value="Normal"></combo-box>
      <div class="sync"><span>同步</span><i></i><i></i><em>入</em><em>出</em><span class="m">MIDI</span><i></i><i></i></div>
    </div>
    <div class="col">
      <combo-box label="Tempo" prefix="bpm" value="120.00"></combo-box>
      <combo-box label="Signature" prefix="  /" middle value="4 / 4"></combo-box>
      <div class="pair"><button class="key">打点</button><button class="key" aria-label="Grid lock"><ui-icon name="hash" size="10"></ui-icon>&nbsp;<ui-icon name="unlock" size="10"></ui-icon></button></div>
    </div>
    <div class="jog">
      <button class="key" aria-label="Jog back"><ui-icon name="backl" size="14"></ui-icon></button>
      <button class="key" aria-label="Jog forward"><ui-icon name="fwdl" size="14"></ui-icon></button>
      <svg width="50" height="52" aria-hidden="true">
        <defs><linearGradient id="g" x1="0" x2="1" y1="0" y2="1"><stop offset="0" stop-color="#f2f2f2"/><stop offset=".5" stop-color="#cfcfcf"/><stop offset="1" stop-color="#f2f2f2"/></linearGradient></defs>
        <circle cx="25" cy="26" r="25" fill="#222" opacity=".5"/><circle cx="25" cy="25" r="24.500" fill="url(#g)"/>
        <path d="M25 25L47 14a25 25 0 0 1 2 17z" fill="#8e8e8e" opacity=".55"/><path d="M25 25L1 31a24 24 0 0 0 5 9z" fill="#9a9a9a" opacity=".5"/><path d="M25 25L30 1h-12z" fill="#fff" opacity=".5"/>
        <path d="M26 6v7" stroke="#ff8d8d" stroke-width="2"/>
      </svg>
    </div>
  </div>
`, (el, root) => {
  const nums = root.querySelector('.nums');
  for (let i = 1; i <= 12; i++) {
    const key = document.createElement('button');
    key.className = 'key';
    key.textContent = i;
    nums.append(key);
  }
});

define('peak-meter', `
  :host { flex: 1; display: flex; background: #000; }
  .edge { width: 18px; background: linear-gradient(90deg, #272d2a 80%, #111); }
  .bars { flex: 1; display: flex; gap: 36px; padding: 28px 0 7px 33px; }
  .bars i { width: 1px; background: repeating-linear-gradient(#0000 0 2px, #0005 2px 3px), linear-gradient(#f00 0 14%, #e8a020 14% 27%, #268a00 27%); }
`, '<div class="edge"></div><div class="bars"><i></i><i></i></div>');

/* ---------- application ---------- */

define('samp-app', `
  :host { display: flex; flex-direction: column; height: 100vh; }
  main { flex: 1; min-height: 0; padding: 26px 82px 0 21px; background: #a7a9b6; }
  .dock { display: grid; grid-template-columns: minmax(0, 1fr) 119px; height: 218px; flex: none; background: #181b19; column-gap: 3px; border-bottom: 1px solid #222; }
  .floor { flex: 1; background: #959595; display: flex; }
`, `
  <app-titlebar>Samplitude Pro X Download Version - 综合效果vst.VIP    44100 Hz L: 00:01:00:000</app-titlebar>
  <app-menubar items="文件(F)|编辑(E)|视图(V)|音轨(T)|对象(B)|自动控制(U)|范围(R)|效果(E)|工具(L)|播放 / 录音(P)|速度|MIDI|CD/DVD|选项(O)|窗口(W)|帮助(H)"></app-menubar>
  <app-toolbar></app-toolbar>
  <main>
    <project-window>
      <span slot="title">综合效果vst.VIP    44100 Hz L: 00:01:00:000</span>
      <track-console></track-console>
      <track-head></track-head>
      <track-timeline></track-timeline>
    </project-window>
  </main>
  <div class="dock">
    <dock-panel>
      <dock-tabs></dock-tabs>
      <div class="floor"><transport-panel></transport-panel></div>
    </dock-panel>
    <dock-panel cut><peak-meter></peak-meter></dock-panel>
  </div>
  <app-statusbar></app-statusbar>
`);
</script>
</body>
</html>
